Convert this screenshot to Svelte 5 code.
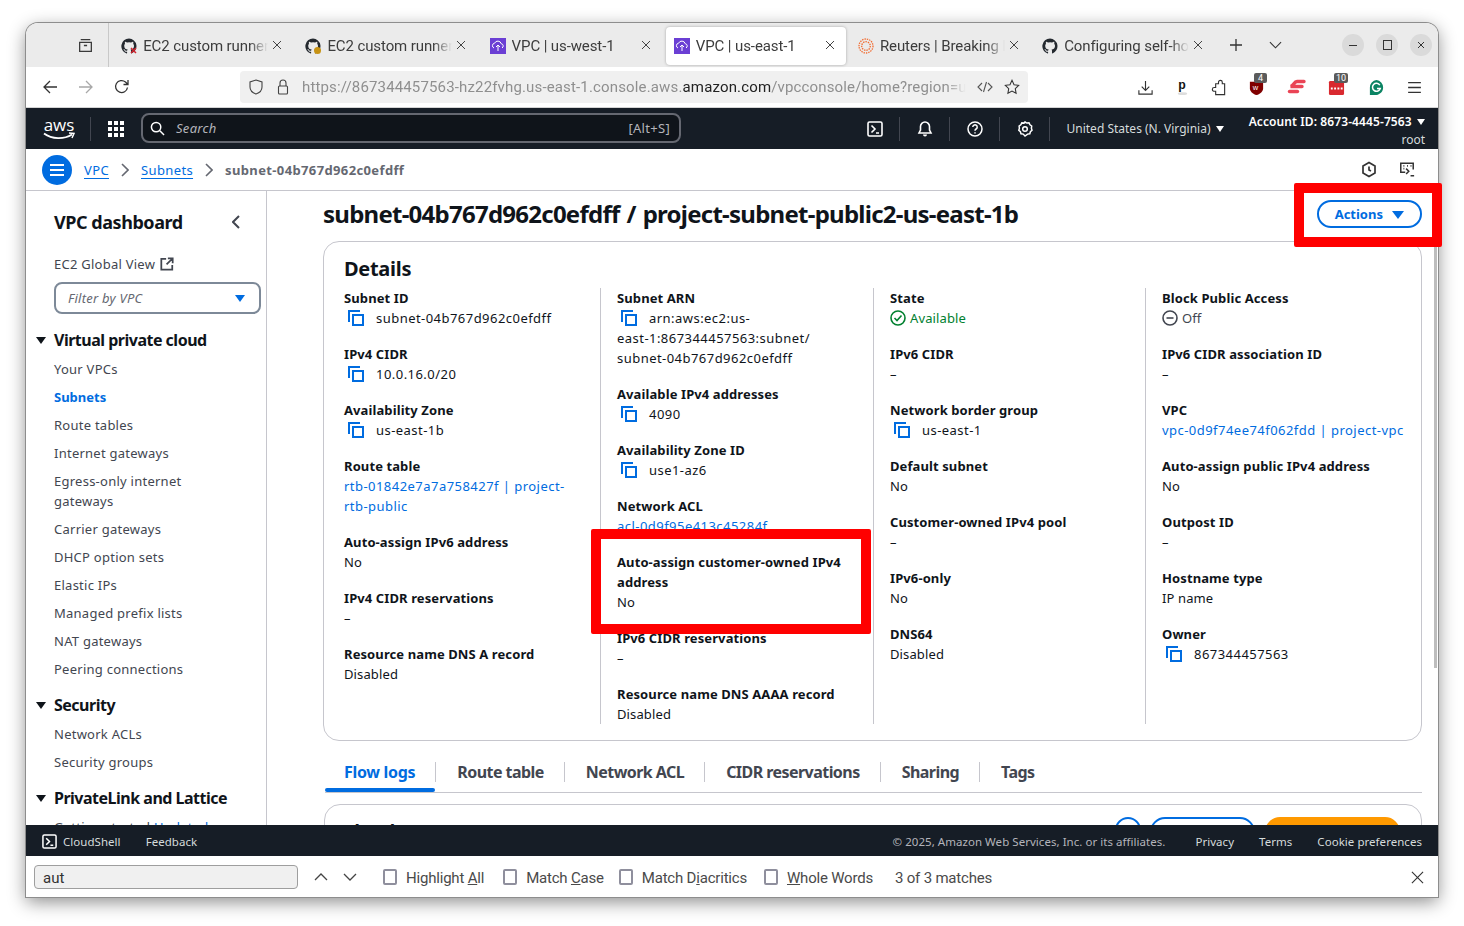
<script lang="ts">
  type Tab = { title: string, icon: string, active?: boolean };

  const tabs: Tab[] = [
    { title: 'EC2 custom runner', icon: 'ghx' },
    { title: 'EC2 custom runner', icon: 'gho' },
    { title: 'VPC | us-west-1', icon: 'vpc' },
    { title: 'VPC | us-east-1', icon: 'vpc', active: true },
    { title: 'Reuters | Breaking International', icon: 'reuters' },
    { title: 'Configuring self-hosted', icon: 'gh' }
  ];

  const vpcLinks = ['Your VPCs', 'Subnets', 'Route tables', 'Internet gateways', 'Egress-only internet gateways', 'Carrier gateways', 'DHCP option sets', 'Elastic IPs', 'Managed prefix lists', 'NAT gateways', 'Peering connections'];

  // kind: c = copy icon, l = link, s = status
  const columns = [
    [
      { label: 'Subnet ID', value: 'subnet-04b767d962c0efdff', kind: 'c' },
      { label: 'IPv4 CIDR', value: '10.0.16.0/20', kind: 'c' },
      { label: 'Availability Zone', value: 'us-east-1b', kind: 'c' },
      { label: 'Route table', value: 'rtb-01842e7a7a758427f | project-\nrtb-public', kind: 'l' },
      { label: 'Auto-assign IPv6 address', value: 'No' },
      { label: 'IPv4 CIDR reservations', value: '–' },
      { label: 'Resource name DNS A record', value: 'Disabled' }
    ],
    [
      { label: 'Subnet ARN', value: 'arn:aws:ec2:us-\neast-1:867344457563:subnet/\nsubnet-04b767d962c0efdff', kind: 'c' },
      { label: 'Available IPv4 addresses', value: '4090', kind: 'c' },
      { label: 'Availability Zone ID', value: 'use1-az6', kind: 'c' },
      { label: 'Network ACL', value: 'acl-0d9f95e413c45284f', kind: 'l' },
      { label: 'Auto-assign customer-owned IPv4 address', value: 'No' },
      { label: 'IPv6 CIDR reservations', value: '–' },
      { label: 'Resource name DNS AAAA record', value: 'Disabled' }
    ],
    [
      { label: 'State', value: 'Available', kind: 's' },
      { label: 'IPv6 CIDR', value: '–' },
      { label: 'Network border group', value: 'us-east-1', kind: 'c' },
      { label: 'Default subnet', value: 'No' },
      { label: 'Customer-owned IPv4 pool', value: '–' },
      { label: 'IPv6-only', value: 'No' },
      { label: 'DNS64', value: 'Disabled' }
    ],
    [
      { label: 'Block Public Access', value: 'Off', kind: 'o' },
      { label: 'IPv6 CIDR association ID', value: '–' },
      { label: 'VPC', value: 'vpc-0d9f74ee74f062fdd | project-vpc', kind: 'l' },
      { label: 'Auto-assign public IPv4 address', value: 'No' },
      { label: 'Outpost ID', value: '–' },
      { label: 'Hostname type', value: 'IP name' },
      { label: 'Owner', value: '867344457563', kind: 'c' }
    ]
  ];

  const subTabs = ['Flow logs', 'Route table', 'Network ACL', 'CIDR reservations', 'Sharing', 'Tags'];
</script>

{#snippet ghMark(fill: string)}
  <path fill={fill} d="M8 .5a7.700 7.700 0 0 0-2.400 15c.4.100.500-.2.500-.4v-1.400c-2.100.500-2.600-1-2.600-1-.3-.9-.8-1.100-.8-1.100-.7-.5.100-.5.100-.5.800.100 1.200.800 1.200.800.700 1.200 1.800.900 2.200.700.100-.5.300-.9.500-1.100-1.700-.2-3.500-.9-3.500-3.800 0-.8.300-1.500.800-2-.1-.2-.4-1 .100-2 0 0 .600-.2 2.100.800a7 7 0 0 1 3.800 0c1.500-1 2.100-.8 2.100-.8.500 1 .200 1.800.100 2 .500.500.800 1.200.800 2 0 2.900-1.800 3.600-3.500 3.800.300.200.500.700.500 1.400v2.100c0 .200.100.500.500.400A7.700 7.700 0 0 0 8 .5Z"/>
{/snippet}

{#snippet copyIcon()}
  <svg class="copy" viewBox="0 0 16 16" fill="none" stroke="#006ce0" stroke-width="2"><path d="M1 12V1h11"/><rect x="5" y="5" width="10" height="10"/></svg>
{/snippet}

<div class="page">
<div class="window">
  <div class="tabbar">
    <div class="tabs-left">
      <svg class="ic" viewBox="0 0 16 16" fill="none" stroke="#3a3a3a" stroke-width="1.200"><path d="M3.500 2.500h9M2.500 5h11v8.500h-11zM6.500 8h3"/></svg>
    </div>
    {#each tabs as tab}
      <div class="tab" class:active={tab.active}>
        <span class="favicon">
          {#if tab.icon === 'vpc'}
            <svg viewBox="0 0 16 16"><rect width="16" height="16" fill="#6b3fd4"/><path d="M4 10a2.500 2.500 0 0 1 .6-4.800 3.500 3.500 0 0 1 6.600.5A2.300 2.300 0 0 1 12 10M8 13V7M6 9l2-2 2 2" fill="none" stroke="#fff" stroke-width="1"/></svg>
          {:else if tab.icon === 'reuters'}
            <svg viewBox="0 0 16 16" fill="none" stroke="#f26a2e" stroke-width="1.300" stroke-dasharray="1.400 1"><circle cx="8" cy="8" r="7"/><circle cx="8" cy="8" r="4.300"/></svg>
          {:else}
            <svg viewBox="0 0 16 16">
              {@render ghMark('#24292f')}
              {#if tab.icon === 'ghx'}<path d="M10 10l5 5m0-5l-5 5" stroke="#d1242f" stroke-width="1.500"/>{/if}
              {#if tab.icon === 'gho'}<circle cx="12.500" cy="12.500" r="3.500" fill="#c69214"/>{/if}
            </svg>
          {/if}
        </span>
        <span class="tab-title">{tab.title}</span>
        <svg class="tab-x" viewBox="0 0 10 10" stroke="#444" stroke-width="1"><path d="M1 1l8 8m0-8l-8 8"/></svg>
      </div>
    {/each}
    <div class="tabs-right">
      <svg class="plus" viewBox="0 0 14 14" stroke="#333" stroke-width="1.300"><path d="M7 1v12M1 7h12"/></svg>
      <svg class="chev" viewBox="0 0 14 8" fill="none" stroke="#333" stroke-width="1.200"><path d="M1 1l6 6 6-6"/></svg>
    </div>
    <div class="winbtns">
      <span class="winbtn"><i class="min"></i></span>
      <span class="winbtn"><i class="max"></i></span>
      <span class="winbtn"><svg viewBox="0 0 8 8" stroke="#333" stroke-width="1"><path d="M1 1l6 6m0-6L1 7"/></svg></span>
    </div>
  </div>

  <div class="navbar">
    <div class="nav-btns">
      <svg viewBox="0 0 16 16" fill="none" stroke="#333" stroke-width="1.300"><path d="M15 8H2M8 2L2 8l6 6"/></svg>
      <svg viewBox="0 0 16 16" fill="none" stroke="#a8a8a8" stroke-width="1.300"><path d="M1 8h13M8 2l6 6-6 6"/></svg>
      <svg viewBox="0 0 16 16" fill="none" stroke="#333" stroke-width="1.300"><path d="M13.500 8.500A6 6 0 1 1 11.500 3L14 5.500M14 1v4.500H9.500"/></svg>
    </div>
    <div class="urlbar">
      <svg class="u-ic" viewBox="0 0 16 16" fill="none" stroke="#444" stroke-width="1.100"><path d="M8 1l6 2v5c0 3.500-3 6-6 7-3-1-6-3.500-6-7V3z"/></svg>
      <svg class="u-ic" viewBox="0 0 16 16" fill="none" stroke="#444" stroke-width="1.100"><path d="M5 7V4a3 3 0 0 1 6 0v3"/><rect x="3.500" y="7" width="9" height="8" rx="1"/></svg>
      <span class="url">https://867344457563-hz22fvhg.us-east-1.console.aws.<b>amazon.com</b>/vpcconsole/home?region=us-east-1#SubnetDetails</span>
      <svg class="u-ic" viewBox="0 0 16 16" fill="none" stroke="#555" stroke-width="1.100"><path d="M5 4L1 8l4 4M11 4l4 4-4 4M9.500 3l-3 10"/></svg>
      <svg class="u-ic" viewBox="0 0 18 18" fill="none" stroke="#333" stroke-width="1.200"><path d="M9 1.500l2.300 4.900 5.200.7-3.800 3.700.9 5.300L9 13.500l-4.600 2.600.9-5.300-3.800-3.700 5.200-.7z"/></svg>
    </div>
    <div class="exts">
      <svg viewBox="0 0 18 18" fill="none" stroke="#333" stroke-width="1.200"><path d="M9 2v10M5 8l4 4 4-4M2 12v4h14v-4"/></svg>
      <svg viewBox="0 0 18 18"><text x="4.500" y="11" font-size="13" font-weight="700" font-family="Liberation Sans" fill="#111">p</text><ellipse cx="9" cy="15.500" rx="5" ry="1.500" fill="#ddd"/></svg>
      <svg viewBox="0 0 18 18" fill="none" stroke="#333" stroke-width="1.200"><path d="M6 16.500V13H4.500a2 2 0 0 1 0-4H6V5h3V3.500a2 2 0 0 1 4 0V5h2.500v11.500z"/></svg>
      <span class="ext">
        <svg viewBox="0 0 18 18"><path d="M2 3h14v7c0 3-3 6-7 7-4-1-7-4-7-7z" fill="#800000"/><text x="5" y="12" font-size="8" fill="#fff" font-family="Liberation Sans">w</text></svg>
        <i class="badge">4</i>
      </span>
      <svg class="express" viewBox="0 0 20 18" fill="none" stroke="#ea4455" stroke-width="3.400" stroke-linecap="round"><path d="M17 3.500h-7C7 3.500 6.500 8 3.500 8.500H15"/><path d="M2.500 13.500h8"/></svg>
      <span class="ext">
        <svg viewBox="0 0 18 18"><rect x="1" y="2" width="16" height="15" rx="1.500" fill="#d9292f"/><path d="M3 10h2M6.500 10h2M10 10h2M13.500 10h2" stroke="#fff" stroke-width="2"/></svg>
        <i class="badge">10</i>
      </span>
      <svg viewBox="0 0 18 18"><path d="M9 1a8 8 0 0 1 7 8c0 4.500-3 7-7 8H2V9a8 8 0 0 1 7-8z" fill="#0b8463"/><path d="M12.500 6.500A4.200 4.200 0 1 0 13 10H9.500" fill="none" stroke="#fff" stroke-width="1.600"/></svg>
      <svg viewBox="0 0 16 16" stroke="#333" stroke-width="1.200"><path d="M2 3.500h12M2 8h12M2 12.500h12"/></svg>
    </div>
  </div>

  <header class="awsbar">
    <div class="awsleft">
      <div class="logo">
        <span>aws</span>
        <svg viewBox="0 0 32 9" fill="none"><path d="M1 1.500c8 6 20 6 28 1" stroke="#fff" stroke-width="1.800"/><path d="M26 1l5 .5-2 4.500" stroke="#fff" stroke-width="1.500"/></svg>
      </div>
      <span class="awssep first"></span>
      <div class="dots">{#each Array(9) as _}<i></i>{/each}</div>
      <div class="search">
        <svg viewBox="0 0 16 16" fill="none" stroke="#fff" stroke-width="1.600"><circle cx="6.500" cy="6.500" r="5"/><path d="M10.500 10.500L15 15"/></svg>
        <em>Search</em>
        <span>[Alt+S]</span>
      </div>
    </div>
    <div class="awsright">
      <span class="top-ic"><svg viewBox="0 0 16 16" fill="none" stroke="#fff" stroke-width="1.600"><rect x="1" y="1" width="14" height="14" rx="1.500"/><path d="M4.500 4.500L8 8l-3.500 3.500M9 12h3"/></svg></span>
      <span class="awssep"></span>
      <span class="top-ic"><svg viewBox="0 0 16 16" fill="#fff"><path d="M8 1a4.500 4.500 0 0 0-4.500 4.500V9L2 12h12l-1.500-3V5.500A4.500 4.500 0 0 0 8 1z" fill="none" stroke="#fff" stroke-width="1.600"/><path d="M6 13.500a2 2 0 0 0 4 0z"/></svg></span>
      <span class="awssep"></span>
      <span class="top-ic"><svg viewBox="0 0 16 16" fill="none" stroke="#fff" stroke-width="1.500"><circle cx="8" cy="8" r="7"/><path d="M5.800 6a2.200 2.200 0 1 1 3.300 2c-.8.500-1.100.9-1.100 1.800M8 11.200v1.300"/></svg></span>
      <span class="awssep"></span>
      <span class="top-ic"><svg viewBox="0 0 16 16" fill="none" stroke="#fff" stroke-width="1.500"><circle cx="8" cy="8" r="2.300"/><path d="M8 1l1.800 1.100 2.200-.2 1 1.900 1.700 1.200-.3 2.200.6 2-1.600 1.500-.6 2.100-2.200.3L8 15l-1.800-1.900-2.200-.3-.6-2.100-1.600-1.500.6-2-.3-2.200 1.700-1.200 1-1.900 2.200.2z"/></svg></span>
      <span class="awssep"></span>
      <span class="region">United States (N. Virginia) <i class="tri small"></i></span>
      <div class="account">
        <b>Account ID: 8673-4445-7563 <i class="tri small"></i></b>
        <span>root</span>
      </div>
    </div>
  </header>

  <div class="crumbs">
    <span class="burger"><i></i><i></i><i></i></span>
    <a href="#vpc">VPC</a>
    <svg class="crumb-arrow" viewBox="0 0 8 14" fill="none" stroke="#656871" stroke-width="1.600"><path d="M1 1l6 6-6 6"/></svg>
    <a href="#subnets">Subnets</a>
    <svg class="crumb-arrow" viewBox="0 0 8 14" fill="none" stroke="#656871" stroke-width="1.600"><path d="M1 1l6 6-6 6"/></svg>
    <strong>subnet-04b767d962c0efdff</strong>
    <div class="crumb-tools">
      <svg viewBox="0 0 16 16" fill="none" stroke="#333" stroke-width="1.700"><path d="M8 1l6 3.500v7L8 15l-6-3.500v-7z"/><path d="M8 5v3.500l2 1"/></svg>
      <svg viewBox="0 0 18 18" fill="none" stroke="#333" stroke-width="1.700"><path d="M7 12H2V2h14v7"/><path d="M5 5h1M9 5h1M13 5h1M5 8h1" stroke-width="2"/><path d="M8 8l3 3-3 3M13 16h4"/></svg>
    </div>
  </div>

  <div class="main">
    <nav class="sidebar">
      <div class="side-head">
        <h2>VPC dashboard</h2>
        <svg viewBox="0 0 8 14" fill="none" stroke="#424650" stroke-width="2"><path d="M7 1L1 7l6 6"/></svg>
      </div>
      <div class="global">EC2 Global View
        <svg viewBox="0 0 16 16" fill="none" stroke="#424650" stroke-width="2"><path d="M7 2H1.500v12.500H14V9M9 1.500h5.500V7M14 2L7.500 8.500"/></svg>
      </div>
      <div class="filter"><em>Filter by VPC</em><i class="tri blue"></i></div>

      <h3 class="group"><i class="tri dark"></i>Virtual private cloud</h3>
      <ul>
        {#each vpcLinks as link}
          <li class:current={link === 'Subnets'}>{link}</li>
        {/each}
      </ul>
      <h3 class="group"><i class="tri dark"></i>Security</h3>
      <ul>
        <li>Network ACLs</li>
        <li>Security groups</li>
      </ul>
      <h3 class="group"><i class="tri dark"></i>PrivateLink and Lattice</h3>
      <ul>
        <li>Getting started <span class="upd">Updated</span></li>
      </ul>
    </nav>

    <section class="content">
      <div class="title-row">
        <h1>subnet-04b767d962c0efdff / project-subnet-public2-us-east-1b</h1>
        <button class="actions">Actions <i class="tri blue"></i></button>
      </div>

      <div class="details">
        <h2>Details</h2>
        <div class="cols">
          {#each columns as col}
            <div class="col">
              {#each col as item}
                <div class="item">
                  <div class="lbl">{item.label}</div>
                  {#if item.kind === 'c'}
                    <div class="val wide">{@render copyIcon()}{item.value}</div>
                  {:else if item.kind === 'l'}
                    <div class="val wide link">{item.value}</div>
                  {:else if item.kind === 's'}
                    <div class="val ok">
                      <svg viewBox="0 0 16 16" fill="none" stroke="#00802f" stroke-width="1.600"><circle cx="8" cy="8" r="7"/><path d="M4.500 8l2.500 2.500 4.500-5"/></svg>{item.value}
                    </div>
                  {:else if item.kind === 'o'}
                    <div class="val off">
                      <svg viewBox="0 0 16 16" fill="none" stroke="#424650" stroke-width="1.600"><circle cx="8" cy="8" r="7"/><path d="M4.500 8h7"/></svg>{item.value}
                    </div>
                  {:else}
                    <div class="val">{item.value}</div>
                  {/if}
                </div>
              {/each}
            </div>
          {/each}
        </div>
      </div>

      <div class="subtabs">
        {#each subTabs as t, i}
          <span class="subtab" class:on={i === 0}>{t}</span>
        {/each}
      </div>

      <div class="flow">
        <h3>Flow logs</h3>
        <div class="flow-btns">
          <span class="flow-info"></span>
          <span class="flow-ghost"></span>
          <span class="flow-primary"></span>
        </div>
      </div>
    </section>

    <span class="scrollthumb"></span>
  </div>

  <footer class="awsfoot">
    <div class="foot-left">
      <svg viewBox="0 0 16 16" fill="none" stroke="#fff" stroke-width="1.600"><rect x="1" y="1" width="14" height="14" rx="1.500"/><path d="M4.500 4.500L8 8l-3.500 3.500M9 12h3"/></svg>
      <span>CloudShell</span>
      <span class="fb">Feedback</span>
    </div>
    <div class="foot-right">
      <span class="copyr">© 2025, Amazon Web Services, Inc. or its affiliates.</span>
      <span>Privacy</span>
      <span>Terms</span>
      <span>Cookie preferences</span>
    </div>
  </footer>

  <div class="findbar">
    <input class="find" value="aut" readonly />
    <svg class="arrow first" viewBox="0 0 14 8" fill="none" stroke="#444" stroke-width="1.300"><path d="M1 7l6-6 6 6"/></svg>
    <svg class="arrow" viewBox="0 0 14 8" fill="none" stroke="#444" stroke-width="1.300"><path d="M1 1l6 6 6-6"/></svg>
    <label class="opt one"><i></i><span>Highlight <u>A</u>ll</span></label>
    <label class="opt two"><i></i><span>Match <u>C</u>ase</span></label>
    <label class="opt three"><i></i><span>Match D<u>i</u>acritics</span></label>
    <label class="opt four"><i></i><span><u>W</u>hole Words</span></label>
    <span class="matches">3 of 3 matches</span>
    <svg class="find-x" viewBox="0 0 14 14" stroke="#333" stroke-width="1.200"><path d="M1 1l12 12m0-12L1 13"/></svg>
  </div>

  <span class="mark mark-actions"></span>
  <span class="mark mark-field"></span>
</div>
</div>

<style>
  :global(body) {
    margin: 0;
    background: #fff;
  }

  .page {
    box-sizing: border-box;
    height: 926px;
    padding: 23px 26px 29px;
    overflow: hidden;
  }

  .window {
    --ui: "Roboto", "Noto Sans", sans-serif;
    --aws: "Noto Sans", "Open Sans", sans-serif;
    position: relative;
    box-sizing: border-box;
    width: 1412px;
    height: 874px;
    border-radius: 12px 12px 0 0;
    background: #fff;
    box-shadow: 0 0 0 1px #8d8d8d, 0 5px 18px rgba(0, 0, 0, .45);
    display: flex;
    flex-direction: column;
    font-family: var(--aws);
  }

  /* browser chrome */
  .tabbar {
    height: 44px;
    flex: none;
    display: flex;
    align-items: center;
    background: #ebebeb;
    border-radius: 12px 12px 0 0;
    font-family: var(--ui);
    font-size: 15px;
    color: #3c3c3c;
  }
  .tabs-left {
    width: 83px;
    height: 44px;
    flex: none;
    display: flex;
    align-items: center;
    justify-content: flex-end;
    padding-right: 14px;
    box-sizing: border-box;
    border-right: 1px solid #c8c8c8;
  }
  .ic {
    width: 17px;
    height: 17px;
  }
  .tab {
    position: relative;
    width: 180px;
    height: 38px;
    flex: none;
    box-sizing: border-box;
    margin: 1px 0 0 4.200px;
    padding-left: 8px;
    display: flex;
    align-items: center;
    gap: 6px;
  }
  .tab.active {
    background: #fff;
    border-radius: 4px;
    box-shadow: 0 0 3px rgba(0, 0, 0, .3);
  }
  .favicon {
    width: 16px;
    height: 16px;
    flex: none;
  }
  .favicon svg {
    display: block;
    width: 16px;
    height: 16px;
  }
  .tab-title {
    width: 125px;
    overflow: hidden;
    white-space: nowrap;
    letter-spacing: -.1px;
    -webkit-mask-image: linear-gradient(90deg, #000 85%, transparent);
    mask-image: linear-gradient(90deg, #000 85%, transparent);
  }
  .tab-x {
    position: absolute;
    right: 11px;
    top: 13px;
    width: 10px;
    height: 10px;
  }
  .tabs-right {
    display: flex;
    align-items: center;
    gap: 26px;
    margin-left: 15px;
  }
  .plus {
    width: 14px;
    height: 14px;
  }
  .chev {
    width: 13px;
    height: 8px;
  }
  .winbtns {
    margin-left: auto;
    margin-right: 6px;
    display: flex;
    gap: 12px;
  }
  .winbtn {
    width: 22px;
    height: 22px;
    border-radius: 50%;
    background: #dadada;
    display: flex;
    align-items: center;
    justify-content: center;
  }
  .winbtn svg {
    width: 8px;
    height: 8px;
  }
  .min {
    width: 8px;
    height: 1px;
    background: #333;
  }
  .max {
    width: 7px;
    height: 8px;
    border: 1px solid #333;
  }

  .navbar {
    height: 41px;
    flex: none;
    box-sizing: border-box;
    display: flex;
    align-items: center;
    background: #fff;
    border-bottom: 1px solid #d4d4d4;
  }
  .nav-btns {
    width: 214px;
    flex: none;
    box-sizing: border-box;
    padding-left: 16px;
    display: flex;
    gap: 20px;
  }
  .nav-btns svg {
    width: 16px;
    height: 16px;
  }
  .urlbar {
    width: 788px;
    height: 32px;
    flex: none;
    box-sizing: border-box;
    padding: 0 8px;
    border-radius: 4px;
    background: #f0f0f0;
    display: flex;
    align-items: center;
    gap: 11px;
    font-family: var(--ui);
    font-size: 15px;
    color: #8f8f8f;
  }
  .u-ic {
    width: 16px;
    height: 16px;
    flex: none;
  }
  .urlbar .url {
    flex: 1;
    min-width: 0;
    overflow: hidden;
    white-space: nowrap;
    letter-spacing: .15px;
    -webkit-mask-image: linear-gradient(90deg, #000 97%, transparent);
    mask-image: linear-gradient(90deg, #000 97%, transparent);
  }
  .url b {
    font-weight: 400;
    color: #222;
  }
  .exts {
    margin-left: auto;
    margin-right: 15px;
    display: flex;
    align-items: center;
  }
  .exts svg {
    display: block;
    width: 17px;
    height: 17px;
  }
  .exts > :nth-child(2) {
    margin-left: 20px;
  }
  .exts > :nth-child(3) {
    margin-left: 19px;
  }
  .exts > :nth-child(4),
  .exts > :nth-child(8) {
    margin-left: 21px;
  }
  .exts > :nth-child(5),
  .exts > :nth-child(6) {
    margin-left: 21.500px;
  }
  .exts > :nth-child(7) {
    margin-left: 23px;
  }
  .exts svg.express {
    width: 20px;
    height: 18px;
  }
  .ext {
    position: relative;
  }
  .badge {
    position: absolute;
    left: 6px;
    top: -6px;
    min-width: 9px;
    padding: 0 2px;
    height: 10px;
    border-radius: 2px;
    background: #5b5b5b;
    color: #fff;
    font: normal 9px/10px var(--ui);
    text-align: center;
  }

  /* aws console header */
  .awsbar {
    height: 41px;
    flex: none;
    box-sizing: border-box;
    padding: 0 13px 0 17px;
    display: flex;
    align-items: center;
    justify-content: space-between;
    background: #161d26;
    color: #fff;
  }
  .awsleft,
  .awsright {
    display: flex;
    align-items: center;
  }
  .logo {
    width: 32px;
    display: flex;
    flex-direction: column;
    align-items: center;
    font: 17px/15px "Open Sans", sans-serif;
  }
  .logo svg {
    width: 32px;
    height: 9px;
  }
  .awssep {
    width: 1px;
    height: 24px;
    background: #424650;
    margin: 0 16.500px;
  }
  .awssep.first {
    margin: 0 17px 0 15px;
  }
  .dots {
    display: grid;
    grid-template-columns: repeat(3, 4px);
    gap: 2px;
    width: 16px;
  }
  .dots i {
    height: 4px;
    background: #fff;
  }
  .search {
    width: 540px;
    height: 30px;
    box-sizing: border-box;
    margin: -1px 0 0 17px;
    padding: 0 9px 0 7px;
    border: 2px solid #656871;
    border-radius: 8px;
    background: #0f141a;
    display: flex;
    align-items: center;
    gap: 11px;
    font-size: 13px;
    color: #b4b4bb;
    letter-spacing: .3px;
  }
  .search svg {
    width: 15px;
    height: 15px;
  }
  .search em {
    flex: 1;
  }
  .top-ic {
    display: flex;
  }
  .top-ic svg {
    width: 16px;
    height: 16px;
  }
  .region {
    font-size: 12px;
    color: #d5dbdb;
    white-space: nowrap;
    margin-right: 1px;
  }
  .account {
    margin-left: 24px;
    align-self: flex-start;
    padding-top: 5px;
    display: flex;
    flex-direction: column;
    align-items: flex-end;
    font-size: 12px;
    line-height: 18px;
  }
  .account b {
    font-weight: 600;
    letter-spacing: .1px;
  }
  .account span {
    color: #d5dbdb;
  }
  .tri {
    display: inline-block;
    width: 0;
    height: 0;
    border-left: 5px solid transparent;
    border-right: 5px solid transparent;
    border-top: 7px solid #fff;
  }
  .tri.small {
    border-left-width: 4px;
    border-right-width: 4px;
    border-top-width: 6px;
    margin-left: 2px;
    vertical-align: 1px;
  }
  .tri.blue {
    border-top-color: #006ce0;
  }
  .tri.dark {
    border-top-color: #0f141a;
  }

  .crumbs {
    height: 42px;
    flex: none;
    box-sizing: border-box;
    padding: 0 16px;
    display: flex;
    align-items: center;
    border-bottom: 1px solid #c6c6cd;
    font-size: 13px;
    color: #656871;
    letter-spacing: .37px;
  }
  .burger {
    width: 30px;
    height: 30px;
    margin-right: 12px;
    border-radius: 50%;
    background: #006ce0;
    display: flex;
    flex-direction: column;
    align-items: center;
    justify-content: center;
    gap: 3px;
  }
  .burger i {
    width: 14px;
    height: 2px;
    background: #fff;
  }
  .crumbs a {
    color: #006ce0;
    text-decoration: underline;
    text-underline-offset: 3px;
  }
  .crumb-arrow {
    width: 8px;
    height: 14px;
    margin: 0 12px;
  }
  .crumbs strong {
    font-weight: 700;
  }
  .crumb-tools {
    margin-left: auto;
    display: flex;
    align-items: center;
    gap: 22px;
    padding-right: 7px;
  }
  .crumb-tools svg {
    width: 16px;
    height: 17px;
  }

  .main {
    position: relative;
    height: 634px;
    flex: none;
    display: flex;
    overflow: hidden;
  }
  .sidebar {
    width: 241px;
    flex: none;
    box-sizing: border-box;
    padding: 20px 5px 0 28px;
    border-right: 1px solid #c6c6cd;
    color: #424650;
    font-size: 13px;
    line-height: 20px;
    letter-spacing: .25px;
  }
  .side-head {
    display: flex;
    align-items: center;
    justify-content: space-between;
    padding-right: 21px;
  }
  .side-head h2 {
    margin: 0;
    font-size: 18px;
    line-height: 22px;
    font-weight: 700;
    color: #0f141a;
    letter-spacing: -.45px;
  }
  .side-head svg {
    width: 8px;
    height: 14px;
  }
  .global {
    margin-top: 21px;
    display: flex;
    align-items: center;
    gap: 5px;
  }
  .global svg {
    width: 14px;
    height: 14px;
  }
  .filter {
    margin-top: 8px;
    height: 32px;
    box-sizing: border-box;
    padding: 0 14px 0 12px;
    border: 2px solid #7d8998;
    border-radius: 8px;
    display: flex;
    align-items: center;
    justify-content: space-between;
    color: #656871;
  }
  .group {
    margin: 15px 0 0 -18px;
    display: flex;
    align-items: center;
    gap: 8px;
    font-size: 16px;
    line-height: 22px;
    font-weight: 700;
    color: #0f141a;
    letter-spacing: -.5px;
  }
  .sidebar ul {
    list-style: none;
    margin: 8px 0 0;
    padding: 0;
    display: flex;
    flex-direction: column;
    gap: 8px;
  }
  .sidebar li {
    padding-right: 28px;
  }
  .sidebar li.current {
    color: #006ce0;
    font-weight: 700;
    letter-spacing: 0;
  }
  .upd {
    color: #006ce0;
  }

  .content {
    flex: 1;
    min-width: 0;
    box-sizing: border-box;
    padding: 0 16px 0 56px;
  }
  .title-row {
    height: 50px;
    display: flex;
    align-items: center;
    justify-content: space-between;
  }
  h1 {
    margin: -4px 0 0;
    font-size: 24px;
    line-height: 30px;
    font-weight: 700;
    color: #0f141a;
    letter-spacing: -.75px;
    word-spacing: 1.500px;
    white-space: nowrap;
  }
  .actions {
    width: 105px;
    height: 28px;
    margin-top: -4px;
    padding: 0;
    border: 2px solid #006ce0;
    border-radius: 20px;
    background: #fff;
    color: #006ce0;
    font: 700 13px var(--aws);
  }
  .actions .tri {
    margin-left: 6px;
    border-left-width: 6px;
    border-right-width: 6px;
    border-top-width: 8px;
  }
  .details {
    height: 500px;
    box-sizing: border-box;
    padding: 14px 0 0;
    border: 1px solid #c6c6cd;
    border-radius: 16px;
  }
  .details h2 {
    margin: 0 0 7px 20px;
    font-size: 20px;
    line-height: 25px;
    font-weight: 700;
    color: #0f141a;
    letter-spacing: -.3px;
  }
  .cols {
    display: grid;
    grid-template-columns: 273px 273px 272px 272px;
    padding-left: 3px;
  }
  .col {
    box-sizing: border-box;
    display: flex;
    flex-direction: column;
    gap: 16px;
    min-height: 434px;
    padding: 0 8px 0 16px;
    border-left: 1px solid #c6c6cd;
  }
  .col:first-child {
    border-left-color: transparent;
  }
  .item {
    font-size: 13px;
    line-height: 20px;
    color: #0f141a;
  }
  .lbl {
    font-weight: 700;
    letter-spacing: .1px;
  }
  .val {
    white-space: pre-line;
    letter-spacing: .12px;
  }
  .val.wide {
    letter-spacing: .46px;
  }
  .val svg {
    width: 16px;
    height: 16px;
    vertical-align: -3px;
  }
  .val .copy {
    margin: 0 12px 0 4px;
  }
  .val.link {
    color: #006ce0;
  }
  .val.ok {
    color: #00802f;
  }
  .val.ok svg,
  .val.off svg {
    margin-right: 4px;
  }
  .val.off {
    color: #424650;
  }

  .subtabs {
    margin-top: 16px;
    height: 35px;
    margin-left: 2px;
    display: flex;
    border-bottom: 1px solid #c6c6cd;
  }
  .subtab {
    position: relative;
    height: 20px;
    margin-top: 5px;
    padding: 0 20px 0 21px;
    border-right: 1px solid #c6c6cd;
    font-size: 16px;
    line-height: 20px;
    font-weight: 700;
    color: #424650;
    letter-spacing: -.55px;
    white-space: nowrap;
  }
  .subtab:last-child {
    border-right: 0;
  }
  .subtab.on {
    color: #006ce0;
    padding-left: 19px;
    letter-spacing: -.3px;
  }
  .subtab.on::after {
    content: "";
    position: absolute;
    left: 0;
    right: 0;
    top: 26px;
    height: 4px;
    border-radius: 2px;
    background: #006ce0;
  }
  .flow {
    margin-top: 11px;
    margin-left: 1px;
    height: 60px;
    box-sizing: border-box;
    padding: 12px 21px 0 20px;
    border: 1px solid #c6c6cd;
    border-radius: 16px;
    display: flex;
    justify-content: space-between;
  }
  .flow h3 {
    margin: 0;
    padding-top: 3px;
    font-size: 18px;
    line-height: 22px;
    color: #0f141a;
    letter-spacing: -.3px;
  }
  .flow-btns {
    display: flex;
    gap: 10px;
  }
  .flow-info {
    width: 26px;
    height: 26px;
    margin-right: -1px;
    border: 2px solid #006ce0;
    border-radius: 50%;
    box-sizing: border-box;
  }
  .flow-ghost,
  .flow-primary {
    width: 105px;
    height: 30px;
    flex: none;
    box-sizing: border-box;
    border: 2px solid #006ce0;
    border-radius: 20px;
  }
  .flow-primary {
    width: 135px;
    border-color: #ff9900;
    background: #ff9900;
  }
  .scrollthumb {
    position: absolute;
    right: 1px;
    top: 54px;
    width: 3px;
    height: 423px;
    background: #bdbdbd;
  }

  .awsfoot {
    height: 31px;
    flex: none;
    box-sizing: border-box;
    padding: 1px 16px 0;
    display: flex;
    align-items: center;
    justify-content: space-between;
    background: #161d26;
    color: #d5dbdb;
    font-size: 11.500px;
    letter-spacing: .04px;
  }
  .foot-left,
  .foot-right {
    display: flex;
    align-items: center;
  }
  .foot-left svg {
    width: 15px;
    height: 15px;
    margin-right: 6px;
  }
  .fb {
    margin-left: 25px;
  }
  .foot-right span {
    margin-left: 25px;
  }
  .copyr {
    color: #b4b4bb;
    margin-right: 5px;
  }

  .findbar {
    flex: 1;
    display: flex;
    align-items: center;
    box-sizing: border-box;
    padding: 1px 0 0 8px;
    font-family: var(--ui);
    font-size: 15px;
    color: #4a4a4a;
    letter-spacing: -.2px;
  }
  .find {
    width: 264px;
    height: 24px;
    box-sizing: border-box;
    padding: 1px 8px 0;
    border: 1px solid #9e9e9e;
    border-radius: 4px;
    background: #f0f0f0;
    font: 15px var(--ui);
    color: #333;
    outline: 0;
  }
  .arrow {
    width: 14px;
    height: 8px;
    margin-left: 15px;
  }
  .arrow.first {
    margin-left: 16px;
  }
  .opt {
    display: flex;
    align-items: center;
    gap: 9px;
  }
  .opt span,
  .matches {
    padding-top: 2px;
  }
  .opt.one {
    margin-left: 26px;
  }
  .opt.two {
    margin-left: 19px;
  }
  .opt.three {
    margin-left: 15px;
  }
  .opt.four {
    margin-left: 17px;
  }
  .opt i {
    width: 10px;
    height: 12px;
    border: 2px solid #8f8f9d;
    border-radius: 2px;
  }
  .matches {
    margin-left: 22px;
  }
  .find-x {
    width: 13px;
    height: 13px;
    margin-left: auto;
    margin-right: 14px;
  }

  /* annotation rectangles drawn over the screenshot */
  .mark {
    position: absolute;
    box-sizing: border-box;
    border: 10px solid #f00;
    border-radius: 2px;
    pointer-events: none;
  }
  .mark-actions {
    left: 1268px;
    top: 160px;
    width: 148px;
    height: 64px;
  }
  .mark-field {
    left: 565px;
    top: 506px;
    width: 280px;
    height: 105px;
  }
</style>
